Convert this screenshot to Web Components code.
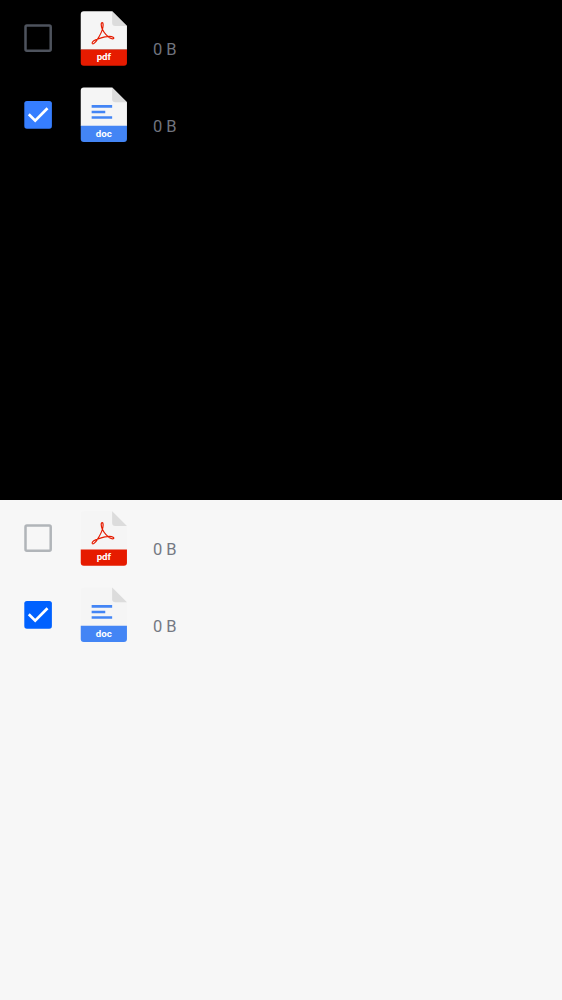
<!DOCTYPE html>
<html lang="en"><head><meta charset="utf-8"><title>Files</title>
<style>html,body{margin:0;height:100%}body{display:flex;flex-direction:column;height:1000px;overflow:hidden;background:#000}</style></head>
<body>
<file-panel theme="dark"><file-row type="pdf"></file-row><file-row type="doc" checked></file-row></file-panel>
<file-panel theme="light"><file-row type="pdf"></file-row><file-row type="doc" checked></file-row></file-panel>
<script>
class FilePanel extends HTMLElement{
  constructor(){super();this.attachShadow({mode:'open'}).innerHTML=`
<style>
:host{display:flex;flex-direction:column;height:500px;background:#000;--line:#4e535d;--accent:#367eff;--meta:#70747e;font-family:Roboto,sans-serif}
:host([theme=light]){background:#f7f7f7;--line:#b1b5b9;--accent:#0061ff;--meta:#757983}
</style><slot></slot>`}
}
class CheckBox extends HTMLElement{
  connectedCallback(){
    const on=this.hasAttribute('checked');
    this.attachShadow({mode:'open'}).innerHTML=`
<style>:host{display:block;width:28px;height:28px}svg{display:block}</style>
<svg width="28" height="28" viewBox="0 0 28 28" fill="none">${on
?'<rect x=".3" y="0" width="27.6" height="27.7" rx="2.6" fill="var(--accent)"/><path d="M4.8 13.3 11.2 19.6 23.5 7.3" stroke="#fff" stroke-width="2.7"/>'
:'<rect x="1.5" y="1.5" width="25.2" height="25.2" rx="1.4" stroke="var(--line)" stroke-width="2.5"/>'}</svg>`}
}
class FileIcon extends HTMLElement{
  connectedCallback(){
    const pdf=this.getAttribute('type')==='pdf';
    const art=pdf
?'<path d="M21.5 11.6C19.9 11.5 20.3 15.2 21.6 18.2C23 21.3 27 26.3 30.4 27.5C32.8 28.4 33.8 27.2 32.4 26.2C30.1 24.8 23.6 25.8 18.1 27.6C14.2 28.9 11.2 31 11.4 32.2C11.8 34.1 14.4 32 16.5 28.6C18.7 25.2 21.3 20.6 22 17C22.6 13.8 22.5 11.7 21.5 11.6Z" stroke="#e61b00" stroke-width="1.2"/>'
:'<path d="M10.9 19.1H31.4M10.9 24.7H24.5M10.9 30.2H31.4" stroke="#4385f5" stroke-width="2.7"/>';
    this.attachShadow({mode:'open'}).innerHTML=`
<style>:host{display:block;width:47px;height:55px}svg{display:block;overflow:visible}text{font:700 9.7px Roboto,sans-serif}</style>
<svg width="47" height="55" viewBox="0 0 47 55" fill="none"><g transform="translate(-.25 ${pdf?0:.3})">
<path d="M3 .2H31.4L46.2 15V38.7H0V3.2A3 3 0 0 1 3 .2Z" fill="#f5f5f5"/>
<path d="M31.4 .2 46.2 15H34.4A3 3 0 0 1 31.4 12Z" fill="#dcdcdc"/>
<path d="M0 38.4H46.2V51.8A3 3 0 0 1 43.2 54.8H3A3 3 0 0 1 0 51.8Z" fill="${pdf?'#e61b00':'#4385f5'}"/>
${art}<text x="23.1" y="${pdf?49:49.7}" text-anchor="middle" fill="#fff">${pdf?'pdf':'doc'}</text></g></svg>`}
}
class FileRow extends HTMLElement{
  connectedCallback(){
    const type=this.getAttribute('type'),on=this.hasAttribute('checked')?'checked':'';
    this.attachShadow({mode:'open'}).innerHTML=`
<style>
:host{display:flex;align-items:center;height:76.5px;padding-left:24px;box-sizing:border-box}
file-icon{margin-left:28.7px}
.size{margin:24px 0 0 25.3px;font-size:16.5px;line-height:20px;color:var(--meta)}
</style><check-box ${on}></check-box><file-icon type="${type}"></file-icon><span class="size">0 B</span>`}
}
customElements.define('check-box',CheckBox);
customElements.define('file-icon',FileIcon);
customElements.define('file-row',FileRow);
customElements.define('file-panel',FilePanel);
</script></body></html>
